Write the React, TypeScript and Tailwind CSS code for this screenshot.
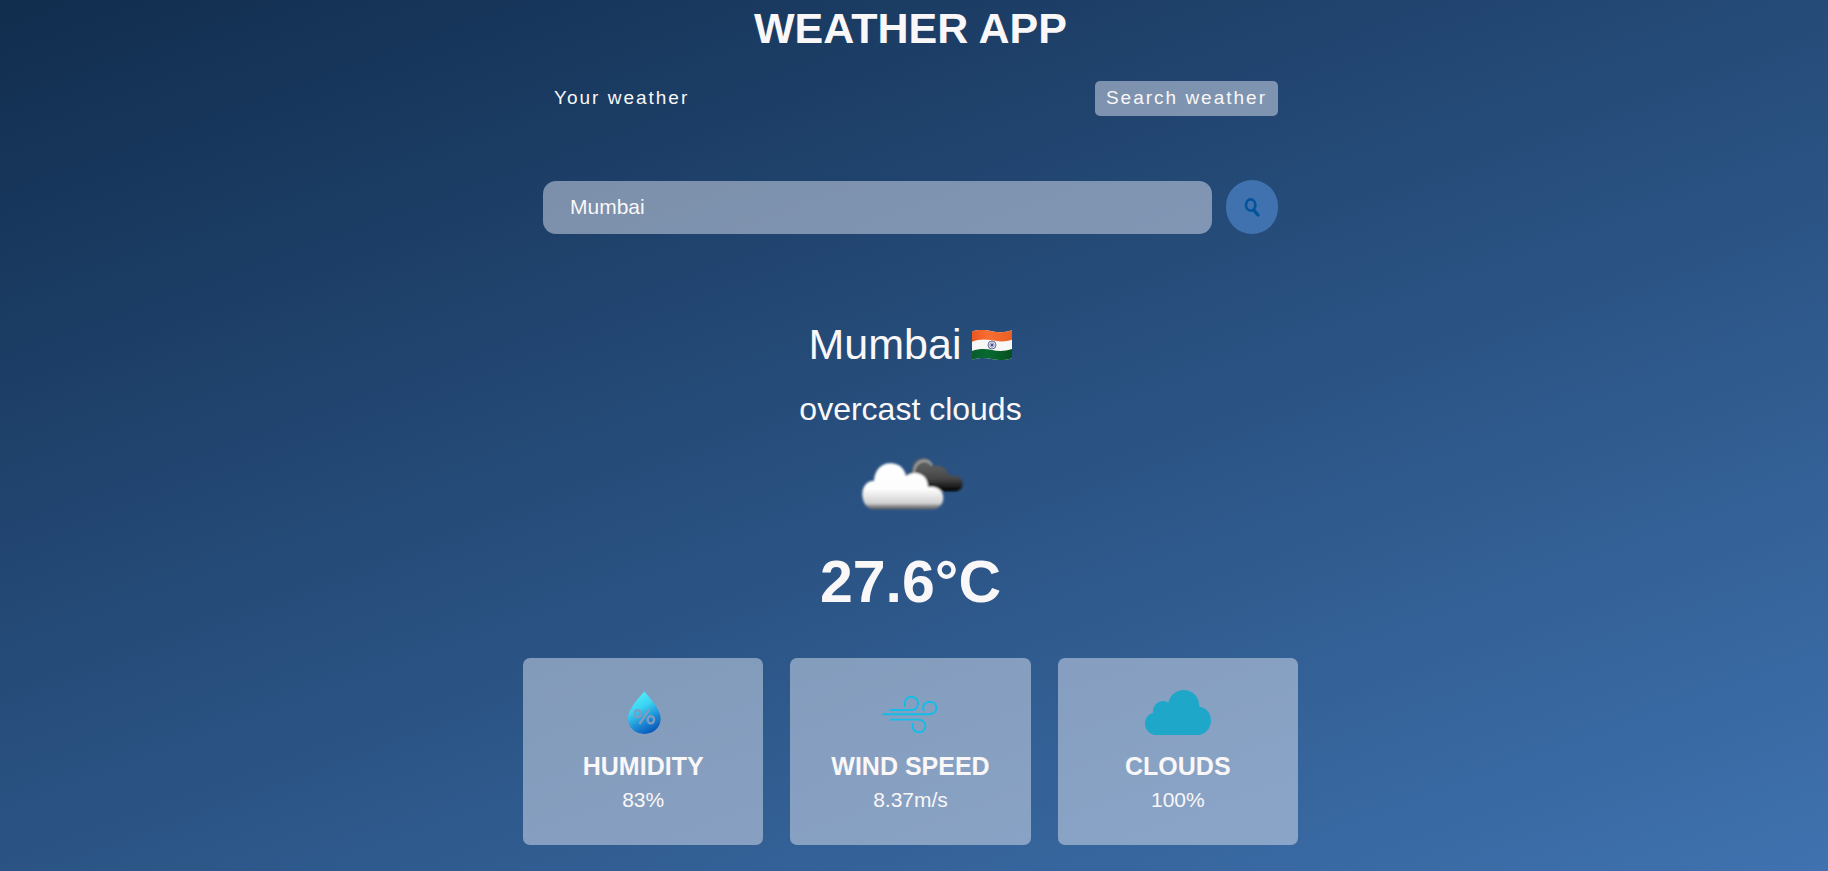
import { useState, type ReactNode } from "react";

function FlagIcon() {
  return (
    <svg viewBox="0 -2 120 93" className="h-[31px] w-10" role="img" aria-label="India">
      <defs>
        <clipPath id="flag-shape">
          <path d="M0 6 C20 -1 42 1 60 5 S100 9 120 2 V86 C100 93 80 92 60 88 S20 84 0 91 Z" />
        </clipPath>
        <linearGradient id="flag-saffron" x1="0" x2="1">
          <stop offset="0" stopColor="#e8571f" />
          <stop offset="0.4" stopColor="#f96f33" />
          <stop offset="1" stopColor="#e95f22" />
        </linearGradient>
        <linearGradient id="flag-green" x1="0" x2="1">
          <stop offset="0" stopColor="#0a5c2c" />
          <stop offset="0.4" stopColor="#066a31" />
          <stop offset="1" stopColor="#07501f" />
        </linearGradient>
      </defs>
      <g clipPath="url(#flag-shape)">
        <rect width="120" height="93" fill="#f7f7f7" />
        <path d="M0 0 H120 V30 C100 37 80 36 60 32 S20 28 0 36 Z" fill="url(#flag-saffron)" />
        <path d="M0 64 C20 57 42 57 60 61 S100 65 120 58 V93 H0 Z" fill="url(#flag-green)" />
        <circle cx="60" cy="46" r="12" fill="none" stroke="#4a5486" strokeWidth="2.5" />
        <circle cx="60" cy="46" r="8" fill="#c3c7dc" />
        <path d="M60 35 V57 M49 46 H71 M52 38 L68 54 M68 38 L52 54" stroke="#6d76a6" strokeWidth="1.5" />
        <circle cx="60" cy="46" r="3" fill="#2e3e86" />
      </g>
    </svg>
  );
}

function OvercastIcon() {
  return (
    <svg viewBox="-12 0 450 270" className="h-[90px] w-[150px]" role="img" aria-label="overcast clouds">
      <defs>
        <linearGradient id="cloud-front" gradientUnits="userSpaceOnUse" x1="0" y1="70" x2="0" y2="210">
          <stop offset="0" stopColor="#ffffff" />
          <stop offset="0.55" stopColor="#fdfdfd" />
          <stop offset="0.86" stopColor="#d0d0d0" />
          <stop offset="0.91" stopColor="#8f8f8f" />
          <stop offset="1" stopColor="#5a5a5a" />
        </linearGradient>
        <linearGradient id="cloud-back" gradientUnits="userSpaceOnUse" x1="0" y1="55" x2="0" y2="155">
          <stop offset="0" stopColor="#686868" />
          <stop offset="0.6" stopColor="#474747" />
          <stop offset="0.85" stopColor="#1c1c1c" />
          <stop offset="1" stopColor="#000000" />
        </linearGradient>
        <filter id="cloud-soft" x="-5%" y="-5%" width="110%" height="110%">
          <feGaussianBlur stdDeviation="2.5" />
        </filter>
      </defs>
      <g filter="url(#cloud-soft)">
        <path
          d="M196 106 C203 102 212 98 216 92 C216 70 230 55 250 55 C264 55 273 62 279 78 C300 74 320 82 327 106 C350 104 368 114 368 130 C368 145 358 154 344 154 H230 Z"
          fill="url(#cloud-back)"
        />
        <path
          d="M222 98 C222 76 238 61 256 62 C266 63 272 68 276 76"
          fill="none"
          stroke="#c9c9c9"
          strokeWidth="6"
          opacity="0.65"
        />
        <path
          d="M98 208 C80 206 67 186 67 162 C67 140 80 122 102 122 C104 90 124 70 150 70 C178 70 194 86 198 108 C208 100 218 98 228 99 C250 101 264 118 264 141 C290 137 310 150 310 174 C310 192 296 207 278 208 Z"
          fill="url(#cloud-front)"
        />
      </g>
    </svg>
  );
}

function HumidityIcon() {
  return (
    <svg viewBox="-4 0 104 135" className="h-[45px] w-[34px] overflow-visible" aria-hidden="true">
      <defs>
        <linearGradient id="drop" x1="0.3" y1="0" x2="0.75" y2="1">
          <stop offset="0" stopColor="#54f0fc" />
          <stop offset="0.35" stopColor="#3bd3f2" />
          <stop offset="0.7" stopColor="#1b87d4" />
          <stop offset="1" stopColor="#0552b4" />
        </linearGradient>
      </defs>
      <path d="M52 3 C68 22 102 56 102 86 C102 114 80 133 52 133 C24 133 2 114 2 86 C2 56 36 22 52 3 Z" fill="url(#drop)" />
      <g fill="none" stroke="#7f9cc0" strokeWidth="7">
        <ellipse cx="32" cy="71" rx="10" ry="11" />
        <ellipse cx="72" cy="90" rx="10" ry="11" />
        <path d="M67 58 L37 103" strokeWidth="8" />
      </g>
    </svg>
  );
}

function WindIcon() {
  return (
    <svg viewBox="2 0 166 135" className="h-[45px] w-[55px] overflow-visible" aria-hidden="true">
      <g fill="none" stroke="#12bde8" strokeWidth="6" strokeLinecap="round">
        <path d="M25 60 H88 C100 60 108 51 108 40 C108 28 98 20 87 20 C74 20 66 30 68 48" />
        <path d="M3 73 H140 C154 73 163 65 163 53 C163 42 154 35 143 35 C130 35 121 44 124 61" />
        <path d="M25 89 H110 C122 89 130 98 130 109 C130 120 121 127 110 127 C97 127 89 118 92 102" />
      </g>
    </svg>
  );
}

function CloudIcon() {
  return (
    <svg viewBox="0 0 198 135" className="h-[45px] w-[66px]" aria-hidden="true">
      <path
        d="M32 135 C14 133 0 119 0 101 C0 85 9 73 24 68 C23 48 37 33 54 33 C61 33 66 35 70 38 C75 15 94 0 116 0 C142 0 163 19 163 50 C184 52 198 70 198 91 C198 114 183 132 164 135 Z"
        fill="#1fa7ca"
      />
    </svg>
  );
}

function SearchIcon() {
  return (
    <svg viewBox="0 0 48 57" className="h-[19px] w-4" aria-hidden="true">
      <g fill="none" stroke="#03539b" strokeLinecap="round">
        <ellipse cx="20" cy="21" rx="14" ry="17" strokeWidth="8" />
        <path d="M30 37 L42 51" strokeWidth="10" />
      </g>
    </svg>
  );
}

function StatCard({ icon, label, value }: { icon: ReactNode; label: string; value: string }) {
  return (
    <article className="flex flex-1 flex-col items-center rounded-[7px] bg-[#dbe2ef]/50 px-4 pt-8 pb-[33px]">
      {icon}
      <h3 className="mt-[17px] text-[25px] leading-7 font-bold uppercase">{label}</h3>
      <p className="mt-2 text-[21px] leading-6">{value}</p>
    </article>
  );
}

const tabs = ["Your weather", "Search weather"];

export default function App() {
  const [tab, setTab] = useState("Search weather");
  const [city, setCity] = useState("Mumbai");

  return (
    <main className="flex min-h-screen flex-col items-center bg-[linear-gradient(160deg,#112d4e_0%,#3f72af_100%)] pt-[3px] pr-[7px] pb-6 font-['Liberation_Sans',Arial,sans-serif] text-[#f9f7f7]">
      <h1 className="text-[43px] leading-[50px] font-bold uppercase">Weather App</h1>

      <div className="mt-7 w-full max-w-[735px]">
        <nav className="flex justify-between">
          {tabs.map((name) => (
            <button
              key={name}
              type="button"
              onClick={() => setTab(name)}
              className={`rounded-[5px] px-[11px] pt-[6px] pb-2 text-[19px] leading-[21px] tracking-[2px] ${
                tab === name ? "bg-[#dbe2ef]/50" : ""
              }`}
            >
              {name}
            </button>
          ))}
        </nav>

        <form className="mt-16 flex items-center gap-[14px]" onSubmit={(event) => event.preventDefault()}>
          <input
            type="text"
            aria-label="City"
            value={city}
            onChange={(event) => setCity(event.target.value)}
            className="h-[53px] min-w-0 flex-1 rounded-[13px] bg-[#dbe2ef]/50 px-[27px] text-[21px] outline-none"
          />
          <button
            type="submit"
            aria-label="Search"
            className="flex h-[54px] w-[52px] items-center justify-center rounded-full bg-[#3f72af]"
          >
            <SearchIcon />
          </button>
        </form>
      </div>

      <section className="mt-[86px] flex w-full max-w-[775px] flex-col items-center">
        <h2 className="flex items-center gap-[11px] text-[43px] leading-[48px]">
          Mumbai
          <FlagIcon />
        </h2>
        <p className="mt-[23px] text-[32px] leading-9">overcast clouds</p>
        <div className="mt-[13px]">
          <OvercastIcon />
        </div>
        <p className="mt-[18px] text-[59px] leading-[68px] font-bold">27.6°C</p>

        <div className="mt-[42px] flex w-full gap-[27px]">
          <StatCard icon={<HumidityIcon />} label="Humidity" value="83%" />
          <StatCard icon={<WindIcon />} label="Wind Speed" value="8.37m/s" />
          <StatCard icon={<CloudIcon />} label="Clouds" value="100%" />
        </div>
      </section>
    </main>
  );
}
